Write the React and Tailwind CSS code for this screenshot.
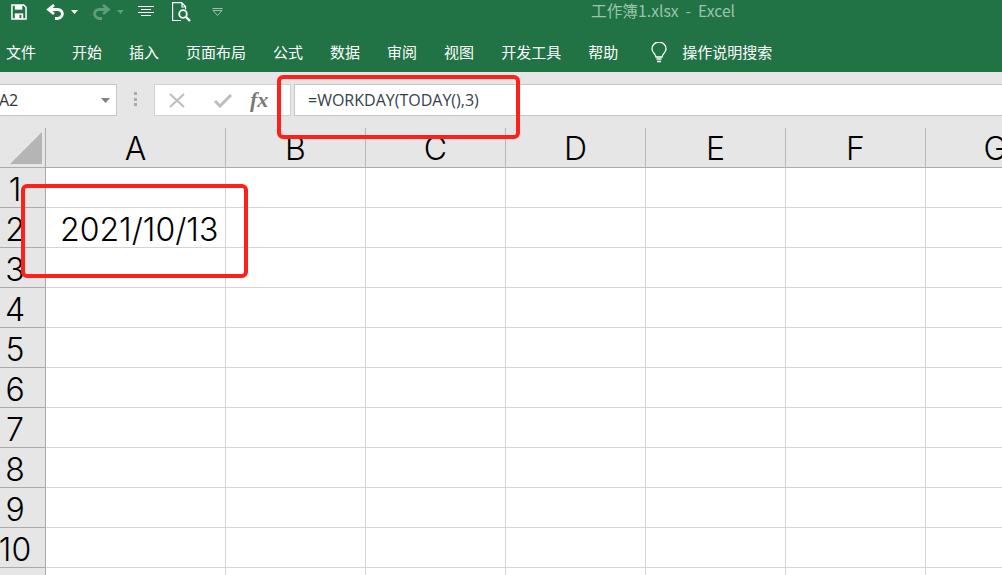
import React from "react";

const CJK = "font-['Microsoft_YaHei','Noto_Sans_CJK_SC',sans-serif]";
const tabs = ["开始", "插入", "页面布局", "公式", "数据", "审阅", "视图", "开发工具", "帮助"];
const columns = ["A", "B", "C", "D", "E", "F", "G"];
const rows = [1, 2, 3, 4, 5, 6, 7, 8, 9, 10, 11];

function QuickAccess() {
  return (
    <div className="flex h-[23px] items-center pl-[11px]">
      {/* save */}
      <svg width="16" height="16" viewBox="0 0 17 17" fill="none">
        <path d="M1 1h12.500L16 3.500V16H1z" stroke="#fff" strokeWidth="1.600" />
        <rect x="4" y="1" width="8" height="5" fill="#fff" />
        <rect x="4" y="10" width="9" height="6" fill="#fff" />
        <rect x="9" y="11.500" width="2" height="3.500" fill="#217346" />
      </svg>
      {/* undo */}
      <svg className="ml-[19px]" width="19" height="16" viewBox="0 0 19 16" fill="none">
        <path d="M8 1 2.500 5.500 8 10" stroke="#fff" strokeWidth="2.800" />
        <path d="M3 5.500h8.500c6.500 0 6.500 8.500 0 9H9" stroke="#fff" strokeWidth="2.800" />
      </svg>
      <svg className="ml-[6px]" width="7" height="4" viewBox="0 0 7 4"><path d="M0 0h7L3.500 4z" fill="#fff" /></svg>
      {/* redo */}
      <svg className="ml-[14px]" width="19" height="16" viewBox="0 0 19 16" fill="none">
        <path d="M11 1l5.500 4.500L11 10" stroke="#5f9c7c" strokeWidth="2.800" />
        <path d="M16 5.500H7.500c-6.500 0-6.500 8.500 0 9H10" stroke="#5f9c7c" strokeWidth="2.800" />
      </svg>
      <svg className="ml-[6px]" width="7" height="4" viewBox="0 0 7 4"><path d="M0 0h7L3.500 4z" fill="#5f9c7c" /></svg>
      {/* align lines */}
      <svg className="ml-[14px]" width="16" height="11" viewBox="0 0 16 11" fill="none" stroke="#fff" strokeWidth="1">
        <path d="M0 .5h16M3 3.500h10M0 6.500h16M3 9.500h10" />
      </svg>
      {/* print preview */}
      <svg className="ml-[18px]" width="19" height="20" viewBox="0 0 19 20" fill="none" stroke="#fff">
        <path d="M9 18.500H.600V.600h9l4 4v3M10 .600v4.400h4" strokeWidth="1.200" />
        <circle cx="11" cy="12" r="3.800" strokeWidth="1.800" />
        <path d="m14 15 4 4" strokeWidth="2.400" />
      </svg>
      {/* customize */}
      <svg className="ml-[21px]" width="11" height="10" viewBox="0 0 11 10" fill="none" stroke="#9cc3ad">
        <path d="M.5 1.500h10M1 3.500l4.500 5 4.500-5z" />
      </svg>
    </div>
  );
}

function Ribbon() {
  return (
    <div className="relative h-[72px] bg-[#217346] text-white">
      <QuickAccess />
      <div className="absolute left-[591px] top-[1px] whitespace-pre font-['Noto_Sans_CJK_SC','Open_Sans',sans-serif] text-[15.7px] leading-[19px] text-[#9cc3ad]">
        工作簿1.xlsx  -  Excel
      </div>
      <div className={`flex h-[49px] items-center pl-[6px] pt-[9px] text-[15px] leading-[20px] ${CJK}`}>
        <span className="mr-[36px]">文件</span>
        <div className="flex gap-[27px]">
          {tabs.map((tab) => (
            <span key={tab}>{tab}</span>
          ))}
        </div>
        <svg className="ml-[33px]" width="16" height="21" viewBox="0 0 16 21" fill="none" stroke="#fff" strokeWidth="1.300">
          <path d="M5 15c0-3-4-4-4-8a7 7 0 0 1 14 0c0 4-4 5-4 8z" />
          <path d="M5.500 17h5M6 19.500h4" strokeWidth="1.600" />
        </svg>
        <span className="ml-[15px]">操作说明搜索</span>
      </div>
    </div>
  );
}

function FormulaBar() {
  return (
    <div className="flex h-[56px] bg-[#e6e6e6] pt-[12px]">
      <div className="flex h-[32px] w-[117px] items-center justify-between border-y border-r border-[#c6c6c6] bg-white pr-[6px] font-['Open_Sans',sans-serif] text-[16px] text-[#333]">
        <span className="ml-[-1px]">A2</span>
        <svg width="9" height="5" viewBox="0 0 9 5"><path d="M0 0h9L4.500 5z" fill="#808080" /></svg>
      </div>
      <div className="ml-[17px] mt-[8px] flex h-[14px] w-[3px] flex-col justify-between">
        <i className="h-[3px] bg-[#aaa]" />
        <i className="h-[3px] bg-[#aaa]" />
        <i className="h-[3px] bg-[#aaa]" />
      </div>
      <div className="ml-[17px] flex h-[32px] w-[137px] items-center border border-[#d0d0d0] bg-white pl-[14px]">
        <svg width="16" height="15" viewBox="0 0 16 15" fill="none" stroke="#bdbdbd" strokeWidth="2">
          <path d="m1 1 14 13M15 1 1 14" />
        </svg>
        <svg className="ml-[29px]" width="18" height="15" viewBox="0 0 18 15" fill="none" stroke="#bdbdbd" strokeWidth="3">
          <path d="m1 8 5 5L17 2" />
        </svg>
        <span className="ml-[18px] font-['Liberation_Serif',serif] text-[22px] font-bold italic leading-none text-[#7a7a7a]">
          fx
        </span>
      </div>
      <div className="ml-[3px] flex h-[32px] flex-1 items-center border-y border-l border-[#c6c6c6] bg-white pl-[13px] font-['Open_Sans',sans-serif] text-[16px] text-[#34404c]">
        =WORKDAY(TODAY(),3)
      </div>
    </div>
  );
}

function Sheet() {
  return (
    <div className="grid grid-cols-[46px_180px_repeat(6,140px)] grid-rows-[40px_repeat(11,40px)] font-['Inter',sans-serif] text-[32px] font-light leading-none text-black">
      <div className="relative border-b border-r border-[#ababab] bg-[#e6e6e6]">
        <svg className="absolute left-[10px] top-[4px]" width="32" height="32" viewBox="0 0 32 32">
          <path d="M32 0v32H0z" fill="#b5b5b5" />
        </svg>
      </div>
      {columns.map((col) => (
        <div
          key={col}
          className="flex items-center justify-center border-b border-r border-b-[#ababab] border-r-[#b8b8b8] bg-[#e6e6e6] pt-[2px]"
        >
          {col}
        </div>
      ))}
      {rows.map((row) => (
        <React.Fragment key={row}>
          <div className="flex items-center justify-center border-b border-r border-[#ababab] bg-[#e6e6e6] pr-[15px] pt-[5px]">
            {row < 11 ? row : ""}
          </div>
          {columns.map((col) => (
            <div
              key={col}
              className="flex items-center whitespace-nowrap border-b border-r border-[#d4d4d4] bg-white pl-[14px] pt-[5px]"
            >
              {col === "A" && row === 2 ? "2021/10/13" : ""}
            </div>
          ))}
        </React.Fragment>
      ))}
    </div>
  );
}

export default function App() {
  return (
    <div className="relative h-[575px] w-[1002px] overflow-hidden bg-white">
      <Ribbon />
      <FormulaBar />
      <Sheet />
      {/* red annotation boxes drawn over the sheet */}
      <div className="absolute left-[277px] top-[75px] h-[64px] w-[243px] rounded-[6px] border-[4px] border-[#ff2119]" />
      <div className="absolute left-[21px] top-[184px] h-[94px] w-[227px] rounded-[6px] border-[4px] border-[#ff2119]" />
    </div>
  );
}
